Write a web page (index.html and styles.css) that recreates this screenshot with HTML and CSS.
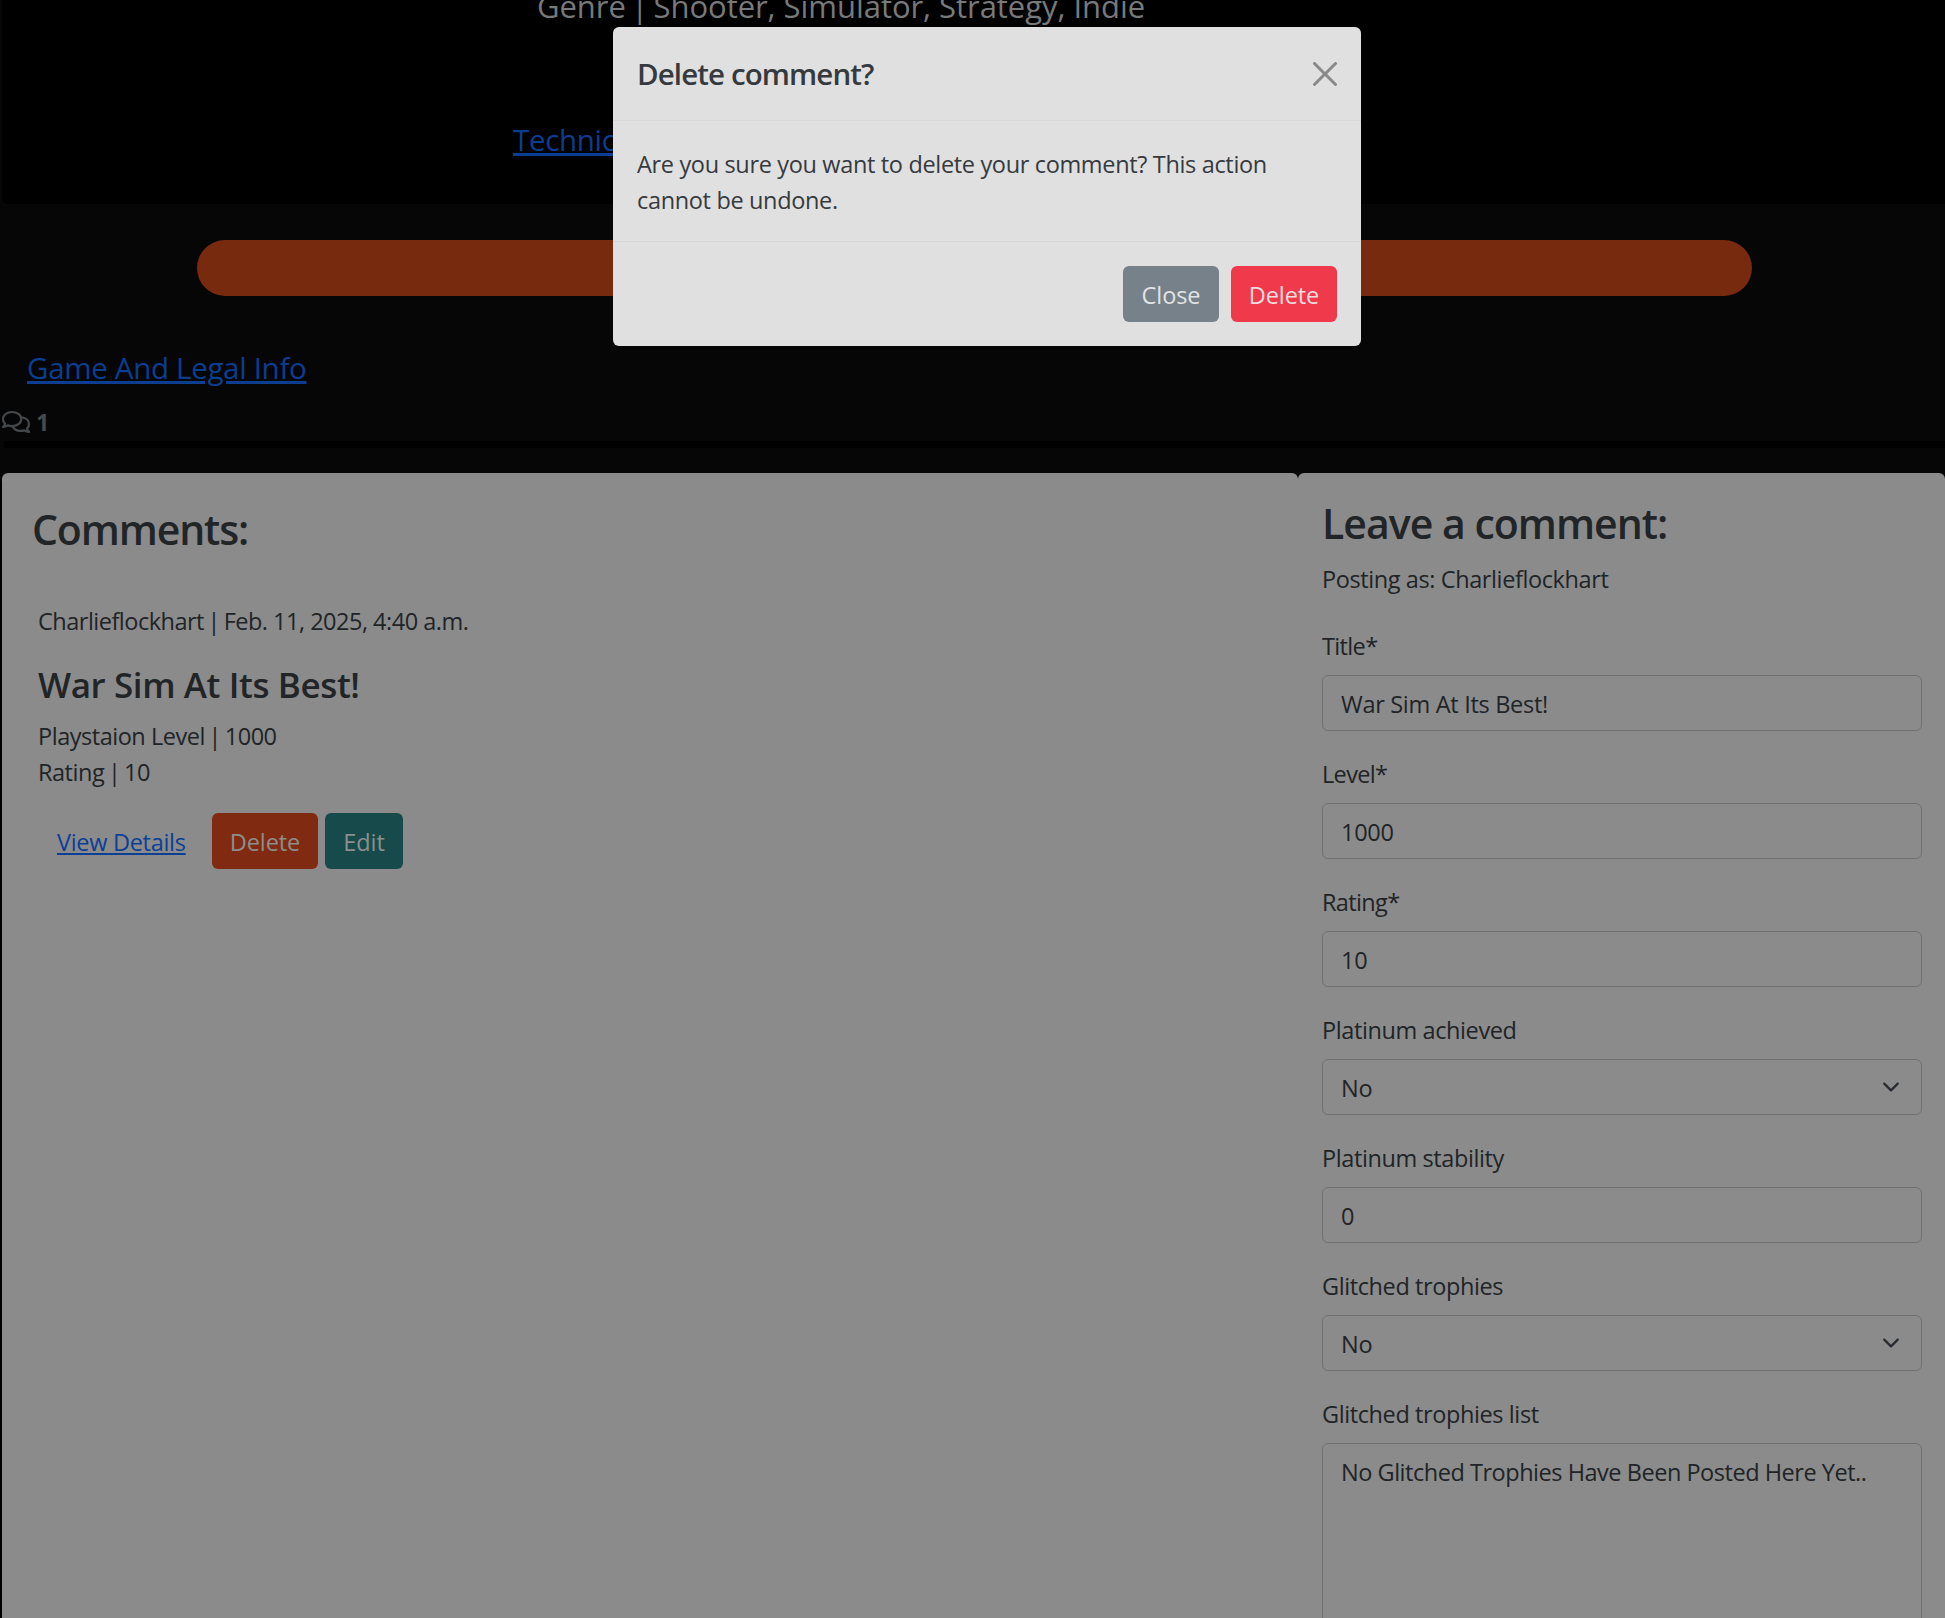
FILE: index.html
```html
<!DOCTYPE html>
<html lang="en">
<head>
<meta charset="utf-8">
<title>Delete comment?</title>
<link rel="stylesheet" href="styles.css">
</head>
<body>
<main class="page">
  <section class="hero">
    <p class="genre">Genre <span class="bar">|</span> Shooter, Simulator, Strategy, Indie</p>
    <a class="big-link tech-link" href="#">Technical Info</a>
  </section>
  <div class="pill"></div>
  <a class="big-link legal-link" href="#">Game And Legal Info</a>
  <div class="count">
    <svg class="count-icon" viewBox="0 0 28 22" fill="none" stroke="currentColor" stroke-width="2.200" stroke-linejoin="round" stroke-linecap="round">
      <path d="M10 1C5 1 1 4 1 8c0 1.900.8 3.400 2 4.700-.3 1.400-1.100 2.500-2 3.300 1.700 0 3.400-.6 4.700-1.600 1.300.5 2.800.7 4.300.7 5 0 9.300-3 9.300-7.100S15 1 10 1z"/>
      <path d="M20.700 6.500c3.600.7 6.300 3.300 6.300 6.500 0 1.800-.8 3.300-2 4.600.3 1.400 1.100 2.500 2 3.300-1.700 0-3.400-.6-4.700-1.500-1.300.4-2.700.6-4.100.5-3.400-.2-6.100-1.700-7.400-4"/>
    </svg>
    <strong>1</strong>
  </div>
  <div class="rule"></div>
  <div class="columns">
    <section class="card comments">
      <h3 class="heading comments-heading">Comments:</h3>
      <article class="comment">
        <p class="meta">Charlieflockhart <span class="bar">|</span> Feb. 11, 2025, 4:40 a.m.</p>
        <h4 class="comment-title">War Sim At Its Best!</h4>
        <p class="stat">Playstaion Level <span class="bar">|</span> 1000</p>
        <p class="stat">Rating <span class="bar">|</span> 10</p>
        <div class="actions">
          <a class="view" href="#">View Details</a>
          <button class="btn btn-orange">Delete</button>
          <button class="btn btn-teal">Edit</button>
        </div>
      </article>
    </section>
    <section class="card leave">
      <h3 class="heading leave-heading">Leave a comment:</h3>
      <p class="posting">Posting as: Charlieflockhart</p>
      <form class="form">
        <label class="field"><span class="label tight">Title*</span><input class="control" value="War Sim At Its Best!"></label>
        <label class="field"><span class="label tight">Level*</span><input class="control" value="1000"></label>
        <label class="field"><span class="label tight">Rating*</span><input class="control" value="10"></label>
        <label class="field"><span class="label">Platinum achieved</span>
          <span class="select-wrap"><select class="control"><option>No</option></select>
          <svg class="chevron" viewBox="0 0 16 16"><path d="m2 5 6 6 6-6"/></svg></span></label>
        <label class="field"><span class="label">Platinum stability</span><input class="control" value="0"></label>
        <label class="field"><span class="label">Glitched trophies</span>
          <span class="select-wrap"><select class="control"><option>No</option></select>
          <svg class="chevron" viewBox="0 0 16 16"><path d="m2 5 6 6 6-6"/></svg></span></label>
        <label class="field"><span class="label">Glitched trophies list</span><textarea class="control area">No Glitched Trophies Have Been Posted Here Yet..</textarea></label>
      </form>
    </section>
  </div>
</main>
<div class="modal" role="dialog">
  <header class="modal-header">
    <h5 class="modal-title">Delete comment?</h5>
    <svg class="close-x" viewBox="0 0 16 16"><path d="M.293.293a1 1 0 0 1 1.414 0L8 6.586 14.293.293a1 1 0 1 1 1.414 1.414L9.414 8l6.293 6.293a1 1 0 0 1-1.414 1.414L8 9.414l-6.293 6.293a1 1 0 0 1-1.414-1.414L6.586 8 .293 1.707a1 1 0 0 1 0-1.414z"/></svg>
  </header>
  <div class="modal-body">Are you sure you want to delete your comment? This action cannot be undone.</div>
  <footer class="modal-footer">
    <button class="btn btn-grey">Close</button>
    <button class="btn btn-red">Delete</button>
  </footer>
</div>
</body>
</html>
```
FILE: styles.css
```css
* { box-sizing: border-box; }
html { height: 100%; overflow: hidden; }
body {
  margin: 0;
  height: 1618px;
  overflow: hidden;
  background: #060606;
  color: #202427;
  font: 400 23.5px/36px "Open Sans", "Noto Sans", sans-serif;
  letter-spacing: -0.4px;
}
h3, h4, h5, p { margin: 0; }
h3, h4, h5 { font-weight: 600; }

.page { height: 1618px; overflow: hidden; display: flex; flex-direction: column; }

.hero {
  flex: none;
  height: 204px;
  margin-left: 2px;
  background: #000;
  border-bottom-left-radius: 6px;
  overflow: hidden;
}
.bar { margin: 0 -0.085em; }
.genre {
  margin: -12px 0 0 535px;
  font-size: 31px;
  letter-spacing: -0.05px;
  color: #77797b;
}
.big-link {
  display: block;
  width: max-content;
  font-size: 29.5px;
  letter-spacing: -0.31px;
  color: #0b3d91;
  text-decoration-thickness: 3px;
  text-underline-offset: 2px;
}
.tech-link { margin: 98px 0 0 511px; }
.legal-link { flex: none; margin: 54px 0 0 27px; }

.pill {
  flex: none;
  height: 56px;
  margin: 36px 193px 0 197px;
  border-radius: 28px;
  background: #782a0f;
}

.count {
  flex: none;
  display: flex;
  align-items: center;
  gap: 6px;
  height: 36px;
  margin: 18px 0 0 2px;
  color: #45494c;
}
.count-icon { width: 28px; height: 22px; overflow: visible; }

.rule { flex: none; height: 7px; margin: 1px 0 25px 4px; background: #000; }

.columns { flex: none; display: grid; grid-template-columns: 1296px 1fr; height: 1200px; padding-left: 2px; background: linear-gradient(#060606 8px, #000 8px); }
.card { background: #8b8b8b; border-radius: 6px 6px 0 0; }
.comments { padding: 31px 30px 0; }
.heading { font-size: 41px; line-height: 50px; color: #222527; }
.comments-heading { letter-spacing: -1.14px; }
.leave-heading { letter-spacing: -0.99px; }

.comment { padding: 49px 0 0 6px; }
.meta { letter-spacing: -0.5px; }
.comment-title {
  margin: 24px 0 12px;
  font-size: 35px;
  line-height: 43px;
  letter-spacing: -0.4px;
  color: #222527;
}
.stat { letter-spacing: -0.47px; }
.actions { display: flex; margin-top: 23px; padding-left: 19px; }
.view {
  width: 155px;
  padding: 11px 0 9px;
  color: #0b3f95;
  letter-spacing: -0.3px;
  text-decoration-thickness: 2px;
  text-underline-offset: 2px;
}

.btn {
  height: 56px;
  padding: 11px 0 9px;
  border: 0;
  border-radius: 6px;
  font: inherit;
  letter-spacing: -0.1px;
  text-align: center;
}
.btn-orange { width: 106px; margin-right: 7px; background: #802a12; color: #8f8d8c; }
.btn-teal { width: 78px; background: #174a4a; color: #8b8f8f; }
.btn-grey { width: 96px; background: #76818a; color: #e2e3e4; }
.btn-red { width: 106px; background: #f03a4b; color: #f0dddf; }

.leave { padding: 25px 23px 0 24px; }
.posting { margin-top: 13px; }
.form { display: flex; flex-direction: column; gap: 25px; margin-top: 31px; }
.field { display: flex; flex-direction: column; gap: 11px; }
.tight { letter-spacing: -0.65px; }
.control {
  display: block;
  width: 100%;
  height: 56px;
  margin: 0;
  padding: 10px 18px 8px;
  border: 1px solid #707174;
  border-radius: 6px;
  background: transparent;
  color: inherit;
  font: inherit;
  letter-spacing: -0.3px;
  appearance: none;
  outline: 0;
}
.area { height: 400px; resize: none; letter-spacing: -0.47px; }
.select-wrap { position: relative; display: block; }
.chevron { position: absolute; right: 22px; top: 19px; width: 18px; height: 18px; }
.chevron path { fill: none; stroke: #282c30; stroke-width: 2; stroke-linecap: round; stroke-linejoin: round; }

.modal {
  position: absolute;
  left: 613px;
  top: 27px;
  width: 748px;
  height: 319px;
  border-radius: 6px;
  background: #e0e0e0;
  color: #363a3e;
  overflow: hidden;
}
.modal-header {
  display: flex;
  justify-content: space-between;
  height: 94px;
  padding: 24px;
  border-bottom: 1px solid #d5d7da;
}
.modal-title { font-size: 29.5px; line-height: 45px; font-weight: 600; letter-spacing: -0.89px; }
.close-x { width: 24px; height: 24px; margin-top: 11px; fill: #898989; }
.modal-body { height: 120px; padding: 25px 24px 0; letter-spacing: -0.34px; }
.modal-footer {
  display: flex;
  justify-content: flex-end;
  gap: 12px;
  padding: 24px;
  border-top: 1px solid #d5d7da;
}
```
